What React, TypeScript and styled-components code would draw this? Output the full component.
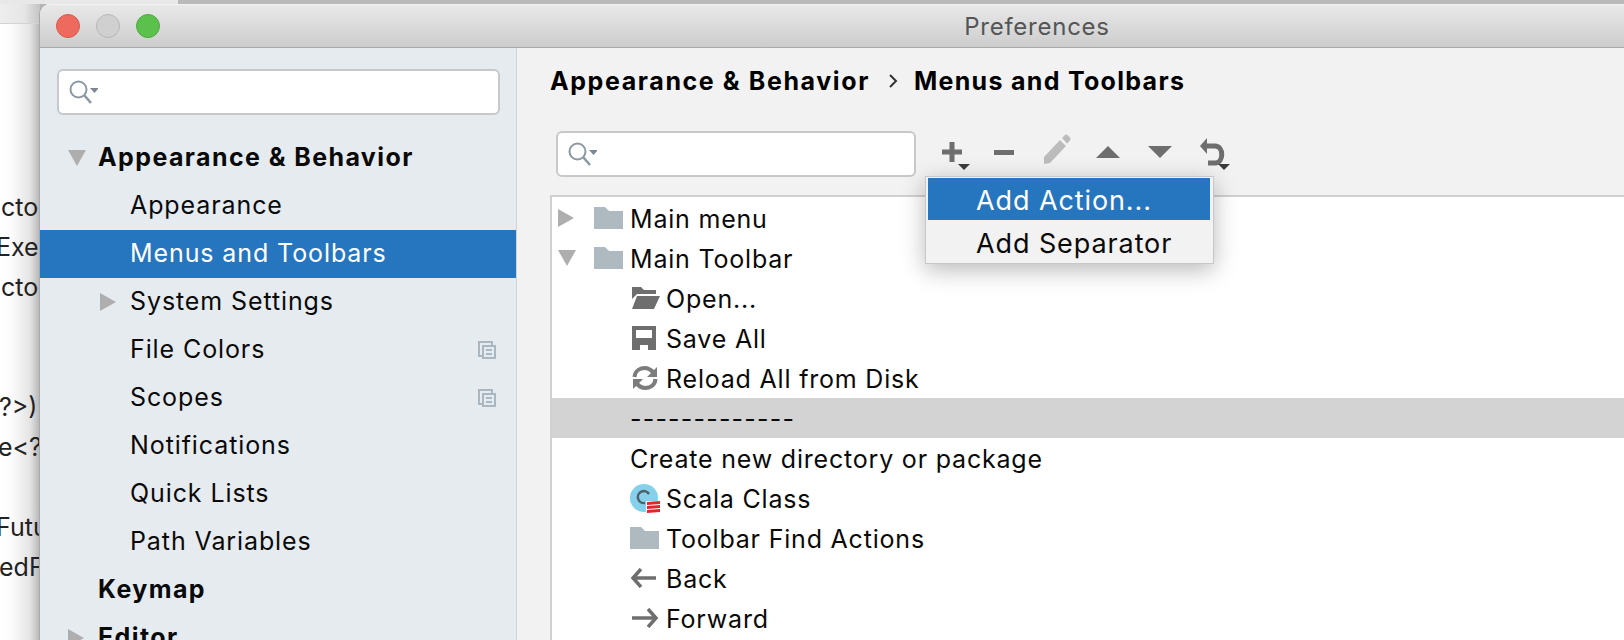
import React from "react";
import styled, { createGlobalStyle } from "styled-components";

const GlobalStyle = createGlobalStyle`
  html, body { margin: 0; padding: 0; background: #fff; }
  body { font-family: Inter, "Liberation Sans", sans-serif; color: #0a0a0a; }
`;

const Desktop = styled.div`
  position: relative;
  width: 1624px;
  height: 640px;
  overflow: hidden;
  background: linear-gradient(90deg, #fff 0, #fbfbfb 12px, #e4e4e4 30px, #b4b4b4 40px);
`;

const BackTop = styled.div`
  display: flex;
  height: 4px;
  background: #b9b9b9;
`;
const BackTopLight = styled.div`
  width: 178px;
  background: #e8e8e8;
`;
const BackBar = styled.div`
  width: 40px;
  height: 19px;
  background: linear-gradient(90deg, #eeeeee, #e6e6e6 60%, #c4c4c4);
  border-bottom: 1px solid #d4d4d4;
`;
const BackCode = styled.div`
  width: 40px;
  overflow: hidden;
  padding-top: 163px;
`;
const BackLine = styled.div<{ $shift?: number }>`
  height: 40px;
  line-height: 40px;
  font-size: 25px;
  white-space: nowrap;
  margin-left: ${(p) => p.$shift ?? 0}px;
  color: #222;
`;

const Window = styled.div`
  position: absolute;
  left: 40px;
  top: 4px;
  width: 1994px;
  height: 700px;
  border-radius: 10px 0 0 0;
  overflow: hidden;
  display: flex;
  flex-direction: column;
  background: #f2f2f2;
  box-shadow: -1px 0 0 #a9a9a9;
`;

const TitleBar = styled.div`
  height: 43px;
  flex: none;
  display: grid;
  grid-template-columns: 1fr auto 1fr;
  align-items: center;
  background: linear-gradient(180deg, #e9e9e9, #cdcdcd);
  box-shadow: inset 0 1px 0 #f4f4f4;
  border-bottom: 1px solid #a9a9a9;
`;
const Lights = styled.div`
  display: flex;
  gap: 16px;
  padding-left: 16px;
`;
const Light = styled.span<{ $color: string; $edge: string }>`
  width: 22px;
  height: 22px;
  border-radius: 50%;
  background: ${(p) => p.$color};
  border: 1px solid ${(p) => p.$edge};
`;
const Title = styled.div`
  font-size: 24px;
  color: #555;
  letter-spacing: 0.75px;
  padding-top: 2px;
`;

const Body = styled.div`
  flex: 1;
  display: flex;
  min-height: 0;
`;

const Sidebar = styled.div`
  width: 476px;
  flex: none;
  background: #e6ebf0;
  border-right: 1px solid #d2d2d2;
  padding-top: 21px;
`;

const SearchBox = styled.div<{ $w: number }>`
  width: ${(p) => p.$w}px;
  height: 46px;
  box-sizing: border-box;
  flex: none;
  display: flex;
  align-items: center;
  padding-left: 9px;
  background: #fff;
  border: 2px solid #c6c8ca;
  border-radius: 6px;
`;
const SidebarSearch = styled.div`
  padding: 0 0 19px 17px;
`;

const NavRow = styled.div<{ $level: number; $selected?: boolean; $bold?: boolean }>`
  height: 48px;
  box-sizing: border-box;
  padding-bottom: 2px;
  display: flex;
  align-items: center;
  padding-left: ${(p) => (p.$level === 0 ? 28 : 60)}px;
  font-size: 25px;
  letter-spacing: ${(p) => (p.$bold ? 1.4 : 0.9)}px;
  font-weight: ${(p) => (p.$bold ? 700 : 400)};
  background: ${(p) => (p.$selected ? "#2675bf" : "transparent")};
  color: ${(p) => (p.$selected ? "#fff" : "#0a0a0a")};
`;
const ArrowSlot = styled.span`
  width: 30px;
  flex: none;
  display: flex;
  padding-top: 2px;
`;
const ProjectMark = styled.svg`
  margin-left: auto;
  margin-right: 20px;
  margin-top: 2px;
`;

const Content = styled.div`
  flex: 1;
  padding-left: 33px;
  min-width: 0;
`;
const Crumbs = styled.div`
  height: 66px;
  display: flex;
  align-items: center;
  font-size: 25px;
  font-weight: 700;
  color: #000;
`;
const Crumb = styled.span<{ $spacing: number }>`
  letter-spacing: ${(p) => p.$spacing}px;
`;
const CrumbSep = styled.svg`
  margin: 0 16px 0 19px;
`;
const Toolbar = styled.div`
  position: relative;
  height: 48px;
  margin: 16px 0 17px 6px;
  display: flex;
  align-items: center;
`;
const ToolButtons = styled.div`
  display: flex;
  margin-left: 10px;
`;
const ToolIcon = styled.svg`
  display: block;
`;

const Menu = styled.div`
  position: absolute;
  left: 369px;
  top: 46px;
  width: 282px;
  padding: 1px 3px 1px 2px;
  background: #f2f2f2;
  border: 1px solid #c8c8c8;
  box-shadow: 0 6px 22px rgba(0, 0, 0, 0.28);
  z-index: 2;
`;
const MenuItem = styled.div<{ $active?: boolean }>`
  height: 42px;
  box-sizing: border-box;
  padding-top: ${(p) => (p.$active ? 2 : 4)}px;
  display: flex;
  align-items: center;
  padding-left: 48px;
  font-size: 27px;
  letter-spacing: 0.9px;
  background: ${(p) => (p.$active ? "#2675bf" : "transparent")};
  color: ${(p) => (p.$active ? "#fff" : "#0a0a0a")};
`;

const Tree = styled.div`
  background: #fff;
  border-top: 2px solid #d0d0d0;
  border-left: 2px solid #d0d0d0;
  padding-top: 1px;
  height: 500px;
`;
const TreeRow = styled.div<{ $indent: number; $band?: boolean }>`
  height: 40px;
  display: flex;
  align-items: center;
  padding-left: ${(p) => p.$indent}px;
  font-size: 25px;
  letter-spacing: 0.8px;
  background: ${(p) => (p.$band ? "#d3d3d3" : "transparent")};
`;
const TreeLabel = styled.span`
  padding-top: 2px;
`;
const Dashes = styled(TreeLabel)`
  letter-spacing: 1.2px;
`;
const IconSlot = styled.span<{ $w: number }>`
  width: ${(p) => p.$w}px;
  flex: none;
  display: flex;
  align-items: center;
`;

const GRAY = "#6e6e6e";
const ARROW = "#aeaeae";
const FOLDER = "#aeb9c0";

function Search() {
  return (
    <svg width="30" height="26" viewBox="0 0 30 26">
      <circle cx="10.5" cy="10.5" r="8" fill="none" stroke="#8b98a2" strokeWidth="2" />
      <path d="M16 16 L23 24" stroke="#8b98a2" strokeWidth="2.5" />
      <path d="M22 9 H31 L26.5 14 Z" fill="#7b8893" />
    </svg>
  );
}

function RightArrow() {
  return (
    <svg width="16" height="18" viewBox="0 0 16 18">
      <path d="M0 0 L16 9 L0 18 Z" fill={ARROW} />
    </svg>
  );
}

function DownArrow() {
  return (
    <svg width="18" height="16" viewBox="0 0 18 16">
      <path d="M0 0 H18 L9 16 Z" fill={ARROW} />
    </svg>
  );
}

function Folder() {
  return (
    <svg width="29" height="22" viewBox="0 0 29 22">
      <path d="M0 0 H11 L15 4 H29 V22 H0 Z" fill={FOLDER} />
    </svg>
  );
}

function Menus() {
  return (
    <ProjectMark width="18" height="18" viewBox="0 0 18 18" fill="none" stroke="#a9b7c2" strokeWidth="2">
      <path d="M4 15 H1 V1 H14 V4" />
      <rect x="5" y="5" width="12" height="12" />
      <path d="M8 9 H14 M8 13 H14" />
    </ProjectMark>
  );
}

function Dropdown({ x }: { x: number }) {
  return <path d={`M${x} 34 H${x + 12} L${x + 6} 40 Z`} fill="#3c3c3c" />;
}

function Tool({ children }: { children: React.ReactNode }) {
  return (
    <ToolIcon width="52" height="48" viewBox="0 0 52 48">
      {children}
    </ToolIcon>
  );
}

const navItems = [
  { label: "Appearance", level: 1 },
  { label: "Menus and Toolbars", level: 1, selected: true },
  { label: "System Settings", level: 1, arrow: "right" },
  { label: "File Colors", level: 1, mark: true },
  { label: "Scopes", level: 1, mark: true },
  { label: "Notifications", level: 1 },
  { label: "Quick Lists", level: 1 },
  { label: "Path Variables", level: 1 },
  { label: "Keymap", level: 0, bold: true },
  { label: "Editor", level: 0, bold: true, arrow: "right" },
];

export default function App() {
  return (
    <Desktop>
      <GlobalStyle />
      <BackTop>
        <BackTopLight />
      </BackTop>
      <BackBar />
      <BackCode>
        <BackLine $shift={1}>cto</BackLine>
        <BackLine $shift={-4}>Exe</BackLine>
        <BackLine $shift={1}>cto</BackLine>
        <BackLine />
        <BackLine />
        <BackLine $shift={-1}>?&gt;):</BackLine>
        <BackLine $shift={-2}>e&lt;?</BackLine>
        <BackLine />
        <BackLine $shift={-4}>Futu</BackLine>
        <BackLine $shift={-1}>edF</BackLine>
      </BackCode>

      <Window>
        <TitleBar>
          <Lights>
            <Light $color="#ee6a5f" $edge="#d9574d" />
            <Light $color="#d0d0d0" $edge="#b6b6b6" />
            <Light $color="#5cc04c" $edge="#4ea93f" />
          </Lights>
          <Title>Preferences</Title>
        </TitleBar>
        <Body>
          <Sidebar>
            <SidebarSearch>
              <SearchBox $w={443}>
                <Search />
              </SearchBox>
            </SidebarSearch>
            <NavRow $level={0} $bold>
              <ArrowSlot>
                <DownArrow />
              </ArrowSlot>
              Appearance &amp; Behavior
            </NavRow>
            {navItems.map((item) => (
              <NavRow key={item.label} $level={item.level} $selected={item.selected} $bold={item.bold}>
                <ArrowSlot>{item.arrow && <RightArrow />}</ArrowSlot>
                {item.label}
                {item.mark && <Menus />}
              </NavRow>
            ))}
          </Sidebar>

          <Content>
            <Crumbs>
              <Crumb $spacing={1.6}>Appearance &amp; Behavior</Crumb>
              <CrumbSep width="9" height="14" viewBox="0 0 9 14" fill="none" stroke="#333" strokeWidth="2">
                <path d="M1 1 L7 7 L1 13" />
              </CrumbSep>
              <Crumb $spacing={1.3}>Menus and Toolbars</Crumb>
            </Crumbs>
            <Toolbar>
              <SearchBox $w={360}>
                <Search />
              </SearchBox>
              <ToolButtons>
                <Tool>
                  <path d="M23.5 12 H28.5 V19.5 H36 V24.5 H28.5 V32 H23.5 V24.5 H16 V19.5 H23.5 Z" fill={GRAY} />
                  <Dropdown x={32} />
                </Tool>
                <Tool>
                  <path d="M16 20 H36 V25 H16 Z" fill={GRAY} />
                </Tool>
                <Tool>
                  <path d="M14 27 L30 10 L36 16 L20 33 L14 34 Z M32 8 L35 5 Q36.5 4 38 5.5 L40 7.5 Q41 9 40 10.5 L37 13.5 Z" fill="#bcbcbc" />
                </Tool>
                <Tool>
                  <path d="M26 16 L38 28 H14 Z" fill={GRAY} />
                </Tool>
                <Tool>
                  <path d="M14 16 H38 L26 28 Z" fill={GRAY} />
                </Tool>
                <Tool>
                  <path d="M19 16 H29 C38 16 38 33 29 33 H22" fill="none" stroke={GRAY} strokeWidth="5" />
                  <path d="M14 16 L21 8 V24 Z" fill={GRAY} />
                  <Dropdown x={32} />
                </Tool>
              </ToolButtons>
              <Menu>
                <MenuItem $active>Add Action...</MenuItem>
                <MenuItem>Add Separator</MenuItem>
              </Menu>
            </Toolbar>
            <Tree>
              <TreeRow $indent={6}>
                <IconSlot $w={36}>
                  <RightArrow />
                </IconSlot>
                <IconSlot $w={36}>
                  <Folder />
                </IconSlot>
                <TreeLabel>Main menu</TreeLabel>
              </TreeRow>
              <TreeRow $indent={6}>
                <IconSlot $w={36}>
                  <DownArrow />
                </IconSlot>
                <IconSlot $w={36}>
                  <Folder />
                </IconSlot>
                <TreeLabel>Main Toolbar</TreeLabel>
              </TreeRow>
              <TreeRow $indent={78}>
                <IconSlot $w={36}>
                  <svg width="30" height="22" viewBox="0 0 30 22">
                    <path d="M2 0 H11 L14 3 H26 V7 H7 L2 12 Z M7 9 H30 L24 22 H2 Z" fill={GRAY} />
                  </svg>
                </IconSlot>
                <TreeLabel>Open...</TreeLabel>
              </TreeRow>
              <TreeRow $indent={78}>
                <IconSlot $w={36}>
                  <svg width="26" height="24" viewBox="0 0 26 24" style={{ marginLeft: 2 }}>
                    <path fillRule="evenodd" d="M0 0 H24 V24 H0 Z M4 4 V12 H20 V4 Z M8 19 V24 H16 V19 Z" fill={GRAY} />
                  </svg>
                </IconSlot>
                <TreeLabel>Save All</TreeLabel>
              </TreeRow>
              <TreeRow $indent={78}>
                <IconSlot $w={36}>
                  <svg width="26" height="24" viewBox="0 0 26 24" style={{ marginLeft: 2 }} fill="none" stroke="#7c7c7c" strokeWidth="4">
                    <path d="M2.5 11 C3 4 9 2 13 2 C17 2 19 4 21 6" />
                    <path d="M23.5 13 C23 20 17 22 13 22 C9 22 7 20 5 18" />
                    <path d="M25 1 V11 H15 Z M1 23 V13 H11 Z" fill="#7c7c7c" stroke="none" />
                  </svg>
                </IconSlot>
                <TreeLabel>Reload All from Disk</TreeLabel>
              </TreeRow>
              <TreeRow $indent={78} $band>
                <Dashes>-------------</Dashes>
              </TreeRow>
              <TreeRow $indent={78}>
                <TreeLabel>Create new directory or package</TreeLabel>
              </TreeRow>
              <TreeRow $indent={78}>
                <IconSlot $w={36}>
                  <svg width="31" height="29" viewBox="0 0 31 29">
                    <circle cx="14" cy="14" r="14" fill="#85d0ea" />
                    <path d="M19 10 A6 6 0 1 0 15 19" fill="none" stroke="#4f5e68" strokeWidth="2.5" />
                    <path d="M16 17 H31 V29 H16 Z" fill="#fff" />
                    <path d="M17 18 L30 17 V20 L17 21 Z M17 22 L30 21 V24 L17 25 Z M17 26 L30 25 V28 L17 29 Z" fill="#e0262a" />
                  </svg>
                </IconSlot>
                <TreeLabel>Scala Class</TreeLabel>
              </TreeRow>
              <TreeRow $indent={78}>
                <IconSlot $w={36}>
                  <Folder />
                </IconSlot>
                <TreeLabel>Toolbar Find Actions</TreeLabel>
              </TreeRow>
              <TreeRow $indent={78}>
                <IconSlot $w={36}>
                  <svg width="27" height="20" viewBox="0 0 27 20" fill="none" stroke={GRAY} strokeWidth="3.5">
                    <path d="M3 10 H26" />
                    <path d="M11 1 L3 10 L11 19" />
                  </svg>
                </IconSlot>
                <TreeLabel>Back</TreeLabel>
              </TreeRow>
              <TreeRow $indent={78}>
                <IconSlot $w={36}>
                  <svg width="28" height="20" viewBox="0 0 28 20" fill="none" stroke={GRAY} strokeWidth="3.5" style={{ marginLeft: 2 }}>
                    <path d="M0 10 H24" />
                    <path d="M16 1 L24 10 L16 19" />
                  </svg>
                </IconSlot>
                <TreeLabel>Forward</TreeLabel>
              </TreeRow>
            </Tree>
          </Content>
        </Body>
      </Window>
    </Desktop>
  );
}
